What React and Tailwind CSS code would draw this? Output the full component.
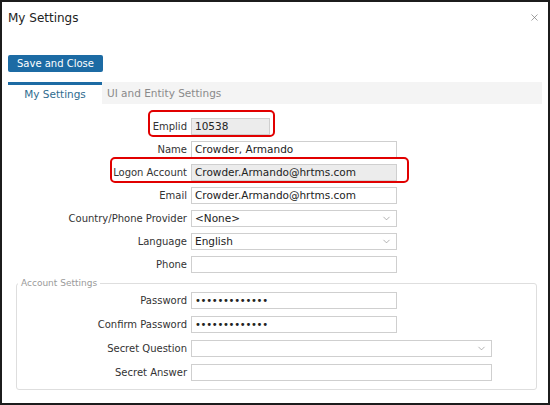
import { ChevronDown, X } from 'lucide-react'

function Field({ value, gray, select, width = 'w-[206px]', dots }) {
  return (
    <div
      className={`${width} h-[17px] ml-[4px] flex items-center justify-between border border-[#cfcfcf] pl-[3px] pr-[4px] text-[10.5px] leading-none text-[#222] ${gray ? 'bg-[#ececec]' : 'bg-white'}`}
    >
      <span className={dots ? 'text-[10px] tracking-[-0.3px]' : ''}>{value}</span>
      {select && <ChevronDown size={11} strokeWidth={1.4} className="text-[#888]" />}
    </div>
  )
}

function Row({ label, labelWidth = 'w-[179px]', h = 'h-[23px]', children }) {
  return (
    <div className={`flex items-center ${h}`}>
      <div className={`${labelWidth} text-right text-[10px] text-[#333]`}>{label}</div>
      {children}
    </div>
  )
}

export default function App() {
  return (
    <div
      className="relative w-[550px] h-[405px] overflow-hidden border-2 border-[#1c1c1c] bg-white"
      style={{ fontFamily: '"DejaVu Sans", Verdana, sans-serif' }}
    >
      <div className="flex items-start justify-between pl-[6px] pr-[8px] pt-[8px]">
        <h1 className="text-[12px] leading-[16px] text-[#222]">My Settings</h1>
        <X size={11} strokeWidth={1.5} className="mt-[2px] text-[#777]" />
      </div>

      <div className="px-[6px]">
        <button className="mt-[29px] h-[17px] w-[95px] rounded-[2px] bg-[#1c6ba4] text-[10px] leading-none text-white">
          Save and Close
        </button>

        <div className="mt-[8px] flex h-[22px]">
          <div className="w-[94px] border-t-[3px] border-[#1c6ba4] bg-white text-center text-[10.5px] leading-[19px] text-[#2f6c8f]">
            My Settings
          </div>
          <div className="flex-1 bg-[#f4f4f4] pl-[5px] text-[10.5px] leading-[22px] text-[#8a8a8a]">
            UI and Entity Settings
          </div>
        </div>

        <div className="mt-[11px]">
          <Row label="Emplid">
            <Field value="10538" gray width="w-[79px]" />
          </Row>
          <Row label="Name">
            <Field value="Crowder, Armando" />
          </Row>
          <Row label="Logon Account">
            <Field value="Crowder.Armando@hrtms.com" gray />
          </Row>
          <Row label="Email">
            <Field value="Crowder.Armando@hrtms.com" />
          </Row>
          <Row label="Country/Phone Provider">
            <Field value="<None>" select />
          </Row>
          <Row label="Language">
            <Field value="English" select />
          </Row>
          <Row label="Phone">
            <Field value="" />
          </Row>
        </div>

        <fieldset className="ml-[8px] mt-[2px] w-[521px] rounded-[3px] border border-[#dedede] pb-[4px]">
          <legend className="ml-[1px] px-[3px] text-[9px] leading-[11px] text-[#9a9a9a]">Account Settings</legend>
          <Row label="Password" labelWidth="w-[170px]" h="h-[24px]">
            <Field value="•••••••••••••" dots />
          </Row>
          <Row label="Confirm Password" labelWidth="w-[170px]" h="h-[24px]">
            <Field value="•••••••••••••" dots />
          </Row>
          <Row label="Secret Question" labelWidth="w-[170px]" h="h-[24px]">
            <Field value="" select width="w-[301px]" />
          </Row>
          <Row label="Secret Answer" labelWidth="w-[170px]" h="h-[24px]">
            <Field value="" width="w-[301px]" />
          </Row>
        </fieldset>
      </div>

      {/* annotation highlights */}
      <div className="pointer-events-none absolute left-[146px] top-[108px] h-[27px] w-[127px] rounded-[5px] border-2 border-[#e10000]" />
      <div className="pointer-events-none absolute left-[108px] top-[155px] h-[26px] w-[299px] rounded-[5px] border-2 border-[#e10000]" />
    </div>
  )
}
